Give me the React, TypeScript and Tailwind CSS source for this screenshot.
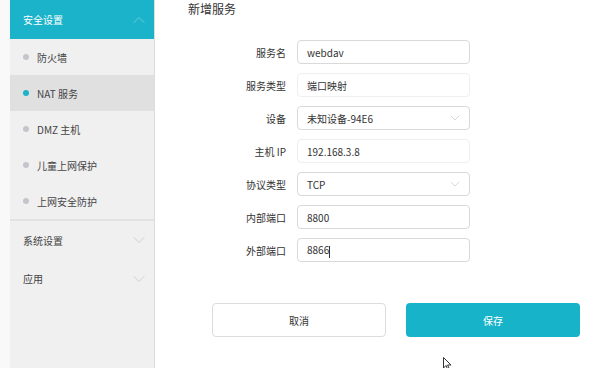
import { ChevronDown, ChevronUp } from "lucide-react";

const menuItems = [
  { label: "防火墙", active: false },
  { label: "NAT 服务", active: true },
  { label: "DMZ 主机", active: false },
  { label: "儿童上网保护", active: false },
  { label: "上网安全防护", active: false },
];

interface Field {
  label: string;
  value: string;
  select?: boolean;
  muted?: boolean;
  caret?: boolean;
}

const fields: Field[] = [
  { label: "服务名", value: "webdav" },
  { label: "服务类型", value: "端口映射", muted: true },
  { label: "设备", value: "未知设备-94E6", select: true },
  { label: "主机 IP", value: "192.168.3.8", muted: true },
  { label: "协议类型", value: "TCP", select: true },
  { label: "内部端口", value: "8800" },
  { label: "外部端口", value: "8866", caret: true },
];

function Sidebar() {
  return (
    <div className="w-[155px] shrink-0 pl-[10px] bg-[#f9f9f9]">
      <div className="h-full bg-[#f0f0f0] border-r border-[#dcdcdc]">
        <div className="h-[39px] bg-[#1bb3c9] flex items-center justify-between pl-[13px] pr-[5px] text-white">
          <span>安全设置</span>
          <ChevronUp size={20} strokeWidth={0.8} className="text-[#8fdbe6]" />
        </div>
        {menuItems.map((item) => (
          <div
            key={item.label}
            className={`h-[36px] flex items-center pl-[13px] text-[#444] ${
              item.active ? "bg-[#e0e0e0]" : ""
            }`}
          >
            <span
              className={`w-[6px] h-[6px] rounded-full mr-[8px] ${
                item.active ? "bg-[#1bb3c9]" : "bg-[#c4c4cc]"
              }`}
            />
            <span>{item.label}</span>
          </div>
        ))}
        <div className="h-[2px] bg-[#e2e2e2]" />
        <div className="h-[38px] flex items-center justify-between pl-[13px] pr-[5px] text-[#444]">
          <span>系统设置</span>
          <ChevronDown size={20} strokeWidth={0.8} className="text-[#c0c0c0]" />
        </div>
        <div className="h-[39px] flex items-center justify-between pl-[13px] pr-[5px] text-[#444]">
          <span>应用</span>
          <ChevronDown size={20} strokeWidth={0.8} className="text-[#c0c0c0]" />
        </div>
      </div>
    </div>
  );
}

function App() {
  return (
    <div
      className="w-[594px] h-[368px] overflow-hidden flex bg-white text-[10px] relative"
      style={{ fontFamily: '"Noto Sans CJK SC", "Noto Sans", sans-serif' }}
    >
      <Sidebar />
      <div className="flex-1 pl-[33px]">
        <div className="text-[12px] text-[#333] leading-[18px]">新增服务</div>
        <div className="mt-[22px] flex flex-col gap-[9px]">
          {fields.map((f) => (
            <div key={f.label} className="flex items-center">
              <div className="w-[109px] text-right pr-[11px] text-[#333]">{f.label}</div>
              <div
                className={`w-[173px] h-[24px] rounded-[4px] border flex items-center justify-between pl-[9px] pr-[6px] text-[#333] ${
                  f.muted ? "border-[#efefef]" : "border-[#d9d9d9]"
                }`}
              >
                <span>
                  {f.value}
                  {f.caret && <span className="inline-block w-px h-[12px] bg-[#333] align-middle" />}
                </span>
                {f.select && (
                  <ChevronDown size={16} strokeWidth={0.9} className="text-[#bdbdbd]" />
                )}
              </div>
            </div>
          ))}
        </div>
        <div className="mt-[41px] flex gap-[20px] pl-[24px]">
          <button className="w-[174px] h-[34px] rounded-[4px] border border-[#dcdcdc] bg-white text-[#333]">
            取消
          </button>
          <button className="w-[174px] h-[34px] rounded-[4px] bg-[#17b3c9] text-white">
            保存
          </button>
        </div>
      </div>
      <svg
        className="absolute left-[443px] top-[357px]"
        width="10"
        height="14"
        viewBox="0 0 10 14"
      >
        <path d="M0.5 0.5 L0.5 11 L3 8.5 L5 13 L6.5 12.3 L4.6 8 L8 8 Z" fill="white" stroke="#333" strokeWidth="1" />
      </svg>
    </div>
  );
}

export default App;
